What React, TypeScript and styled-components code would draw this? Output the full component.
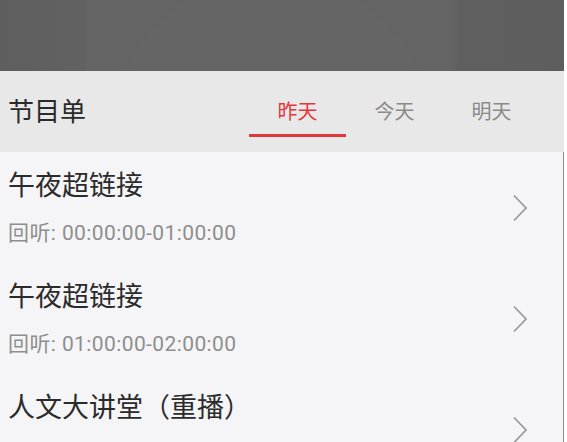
import styled, { createGlobalStyle } from "styled-components";

const GlobalStyle = createGlobalStyle`
  html, body {
    margin: 0;
    padding: 0;
    background: #ffffff;
  }
  body {
    font-family: Roboto, "Noto Sans CJK SC", "Noto Sans", sans-serif;
    overflow: hidden;
  }
`;

const Page = styled.div`
  width: 564px;
  height: 442px;
  display: flex;
  flex-direction: column;
  overflow: hidden;
`;

const Banner = styled.div`
  height: 71px;
  flex-shrink: 0;
  background:
    radial-gradient(ellipse 190px 260px at 272px 230px, #656565 0 98%, rgba(0, 0, 0, 0) 100%),
    linear-gradient(90deg, #5e5e5e 0, #626262 85px, #646464 86px, #646464 450px, #5f5f5f 460px, #5e5e5e 100%);
`;

const Header = styled.div`
  height: 81px;
  flex-shrink: 0;
  display: flex;
  align-items: stretch;
  background: #e8e8e8;
  padding-left: 8px;
  padding-right: 24px;
`;

const Title = styled.h1`
  margin: 0;
  flex: 1;
  align-self: center;
  font-size: 26px;
  font-weight: 400;
  color: #2a2a2a;
  line-height: 36px;
`;

const Tabs = styled.div`
  display: flex;
`;

const Tab = styled.div<{ $active?: boolean }>`
  width: 97px;
  display: flex;
  flex-direction: column;
  align-items: center;
  padding-top: 28px;
  box-sizing: border-box;
  font-size: 20px;
  line-height: 26px;
  color: ${(p) => (p.$active ? "#e2383d" : "#8a8a8a")};
`;

const Indicator = styled.div<{ $active?: boolean }>`
  margin-top: 9px;
  width: 100%;
  height: 3px;
  background: ${(p) => (p.$active ? "#e2383d" : "transparent")};
`;

const List = styled.div`
  flex: 1;
  background: #f5f5f7;
  border-right: 1px solid #8c8c8c;
`;

const Item = styled.div`
  height: 111px;
  flex-shrink: 0;
  box-sizing: border-box;
  display: flex;
  align-items: center;
  padding: 0 34px 0 8px;
`;

const Info = styled.div`
  flex: 1;
  display: flex;
  flex-direction: column;
  gap: 15px;
`;

const Name = styled.div`
  font-size: 27px;
  line-height: 36px;
  color: #2b2b2b;
`;

const Sub = styled.div`
  font-size: 21px;
  line-height: 28px;
  letter-spacing: 0.4px;
  color: #8e8e8e;
`;

const Chevron = () => (
  <svg width="18" height="28" viewBox="0 0 18 28">
    <path d="M3 1.5 L15 14 L3 26.5" fill="none" stroke="#9a9a9a" strokeWidth="1.8" />
  </svg>
);

const programs = [
  { name: "午夜超链接", time: "00:00:00-01:00:00" },
  { name: "午夜超链接", time: "01:00:00-02:00:00" },
  { name: "人文大讲堂（重播）", time: "02:00:00-03:00:00" },
];

const days = ["昨天", "今天", "明天"];

export default function App() {
  return (
    <Page>
      <GlobalStyle />
      <Banner />
      <Header>
        <Title>节目单</Title>
        <Tabs>
          {days.map((d, i) => (
            <Tab key={d} $active={i === 0}>
              {d}
              <Indicator $active={i === 0} />
            </Tab>
          ))}
        </Tabs>
      </Header>
      <List>
        {programs.map((p, i) => (
          <Item key={i}>
            <Info>
              <Name>{p.name}</Name>
              <Sub>回听: {p.time}</Sub>
            </Info>
            <Chevron />
          </Item>
        ))}
      </List>
    </Page>
  );
}
